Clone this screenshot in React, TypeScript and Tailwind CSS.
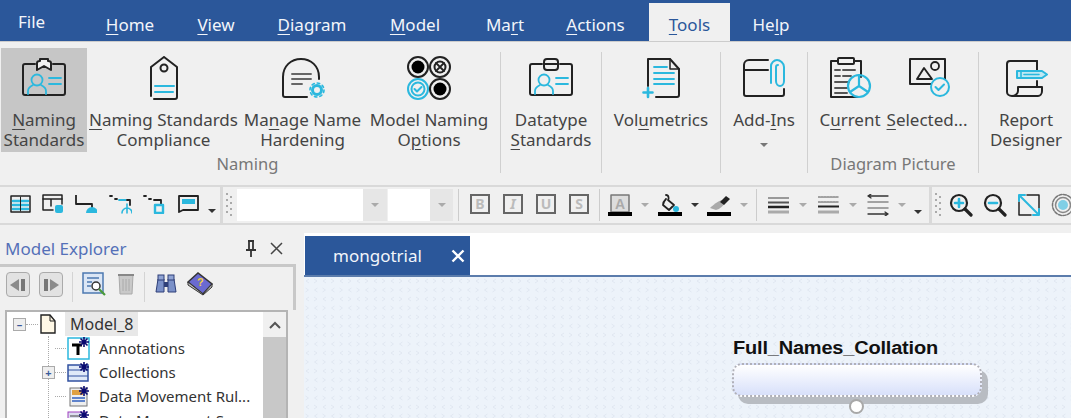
import type { ReactNode } from "react";

const cyan = "#2bb8de";
const ink = "#222";

function U({ children }: { children: ReactNode }) {
  return <span className="underline decoration-1 underline-offset-[3px]">{children}</span>;
}

function MenuTab({ children, w, active }: { children: ReactNode; w: string; active?: boolean }) {
  return (
    <div
      className={`flex items-end justify-center pb-[4px] text-[17px] leading-6 ${w} ${
        active ? "mt-[3px] bg-[#f0f0f0] text-[#2b579a]" : "text-[#f2f5fa]"
      }`}
    >
      <span>{children}</span>
    </div>
  );
}

function RibbonBtn({
  icon,
  lines,
  w,
  active,
  caret,
}: {
  icon: ReactNode;
  lines: ReactNode[];
  w: string;
  active?: boolean;
  caret?: boolean;
}) {
  return (
    <div className={`flex h-[104px] shrink-0 flex-col items-center ${w} ${active ? "bg-[#c6c6c6]" : ""}`}>
      <div className="mb-[2px] flex h-[60px] items-center justify-center">{icon}</div>
      <div className="text-center text-[17px] leading-5 whitespace-nowrap text-[#444]">
        {lines.map((l, i) => (
          <div key={i}>{l}</div>
        ))}
      </div>
      {caret && <div className="mt-[13px] h-0 w-0 border-x-[4px] border-t-[4px] border-x-transparent border-t-[#777]" />}
    </div>
  );
}

function RibbonSep() {
  return <div className="mt-[4px] h-[121px] w-px shrink-0 bg-[#d0d0d0]" />;
}

function Caret({ dark }: { dark?: boolean }) {
  return (
    <div
      className={`h-0 w-0 border-x-[4px] border-t-[4px] border-x-transparent ${
        dark ? "border-t-[#333]" : "border-t-[#aaa]"
      }`}
    />
  );
}

function Svg({ w, h, children }: { w: number; h: number; children: ReactNode }) {
  return (
    <svg width={w} height={h} viewBox={`0 0 ${w} ${h}`} fill="none" strokeLinecap="round" strokeLinejoin="round">
      {children}
    </svg>
  );
}

const BadgeIcon = ({ db }: { db?: boolean }) => (
  <Svg w={44} h={42}>
    <path d="M13 7H3a2 2 0 0 0-2 2v27a2 2 0 0 0 2 2h38a2 2 0 0 0 2-2V9a2 2 0 0 0-2-2H31" stroke={ink} strokeWidth="2" />
    {db ? (
      <g stroke={ink} strokeWidth="2" fill="#f0f0f0">
        <rect x="15" y="2" width="14" height="11" rx="3" />
        <path d="M15 7h14" />
      </g>
    ) : (
      <path d="M15 13V6c0-2 2-2 3-2V2h8v2c1 0 3 0 3 2v7l-7-4z" stroke={ink} strokeWidth="2" fill="#f0f0f0" />
    )}
    <circle cx="15" cy="23" r="5.5" stroke={cyan} strokeWidth="1.8" />
    <path d="M6 37v-3c0-3 3-5 5-6M24 37v-3c0-3-3-5-5-6" stroke={cyan} strokeWidth="1.8" />
    <path d="M27 21h12M27 27h12" stroke={cyan} strokeWidth="1.8" />
  </Svg>
);

const TagIcon = () => (
  <Svg w={32} h={46}>
    <path d="M16 2 29 12v30a2 2 0 0 1-2 2H6M3 41V12L16 2" stroke={ink} strokeWidth="2" />
    <circle cx="16" cy="13" r="3.5" stroke={ink} strokeWidth="2" />
    <path d="M7 31h19M7 37h18" stroke={cyan} strokeWidth="2" />
  </Svg>
);

const HardenIcon = () => (
  <Svg w={44} h={42}>
    <path d="M38 22V20C38 9 30 2 20 2S2 9 2 20v18a2 2 0 0 0 2 2h22" stroke={ink} strokeWidth="2" />
    <path d="M11 17h19M11 22h19M11 27h10" stroke="#666" strokeWidth="1.9" />
    <circle cx="36" cy="33" r="4.5" stroke={cyan} strokeWidth="3" />
    <circle cx="36" cy="33" r="7" stroke={cyan} strokeWidth="1.6" strokeDasharray="2.5 3" />
  </Svg>
);

const FourDots = () => (
  <Svg w={46} h={46}>
    <circle cx="12" cy="12" r="10" stroke={ink} strokeWidth="2" />
    <circle cx="12" cy="12" r="6.5" fill="#000" />
    <circle cx="34" cy="12" r="10" stroke={ink} strokeWidth="2" />
    <circle cx="34" cy="12" r="5.5" stroke={ink} strokeWidth="2" />
    <path d="M30 8l8 8M38 8l-8 8" stroke={ink} strokeWidth="1.8" />
    <circle cx="12" cy="34" r="10" stroke={cyan} strokeWidth="2" />
    <circle cx="12" cy="34" r="6.5" stroke={cyan} strokeWidth="2" />
    <path d="M8.500 34l2.500 2.500 4.500-4.500" stroke={cyan} strokeWidth="2" />
    <circle cx="34" cy="34" r="10" stroke={ink} strokeWidth="2" />
    <circle cx="34" cy="34" r="6.5" fill="#000" />
  </Svg>
);

const VolIcon = () => (
  <Svg w={40} h={44}>
    <path d="M7 30V3h22l9 10v26a2 2 0 0 1-2 2H15" stroke={ink} strokeWidth="2" />
    <path d="M29 3v10h9" stroke={ink} strokeWidth="1.5" />
    <path d="M13 11h13M13 17h20M13 23h20M13 28h20" stroke={cyan} strokeWidth="1.8" />
    <path d="M7 32v9M2.500 36.500h9" stroke={cyan} strokeWidth="2.600" />
  </Svg>
);

const AddInIcon = () => (
  <Svg w={46} h={42}>
    <path d="M27 3H8a5 5 0 0 0-5 5v29a2 2 0 0 0 2 2h36a2 2 0 0 0 2-2V32" stroke={ink} strokeWidth="2" />
    <path d="M3 13h24" stroke={ink} strokeWidth="2" />
    <path d="M30 26V9c0-3 3-6 6-6s7 3 7 7v14c0 3-2 5-4 5s-4-2-4-5V10c0-1 1-2 2-2" stroke={cyan} strokeWidth="2" />
  </Svg>
);

const ClipIcon = () => (
  <Svg w={44} h={44}>
    <path d="M10 5H3v36h27M26 5h7v16" stroke={ink} strokeWidth="2" />
    <rect x="10" y="2" width="16" height="6" rx="1" stroke={ink} strokeWidth="2" />
    <path d="M7 14h5M15 14h12M7 20h5M15 20h8M7 26h14M7 32h12M7 37h12" stroke="#555" strokeWidth="1.900" />
    <circle cx="31" cy="30" r="11" stroke={cyan} strokeWidth="2.200" />
    <path d="M31 30V19M31 30l-9 6M31 30l9 6" stroke={cyan} strokeWidth="2.200" />
  </Svg>
);

const PictureIcon = () => (
  <div className="ml-[4px]">
    <Svg w={42} h={42}>
      <path d="M24 27H2V2h35v20" stroke={ink} strokeWidth="2" />
      <path d="M9 22 16 11l8 11z" stroke={ink} strokeWidth="1.900" />
      <circle cx="27" cy="9" r="4" stroke={ink} strokeWidth="1.800" />
      <circle cx="32" cy="30" r="9" fill="#f0f0f0" stroke={cyan} strokeWidth="2" />
      <path d="M27.500 30l3 3 5.500-5.500" stroke={cyan} strokeWidth="2" />
    </Svg>
  </div>
);

const ReportIcon = () => (
  <Svg w={44} h={40}>
    <path d="M33 3H6a3 3 0 0 0-3 3v28c0 2 2 4 5 4h26c2 0 4-2 4-5v-4H14v4c0 3-3 5-6 5" stroke={ink} strokeWidth="2" />
    <path d="M33 3v11M33 23v6" stroke={ink} strokeWidth="2" />
    <path d="M13 13h25l5 3.500-5 3.500H13z" stroke={cyan} strokeWidth="2" fill="#bfe8f3" />
    <path d="M17 13v7M20 16.500h15" stroke={cyan} strokeWidth="1.600" />
  </Svg>
);

function FormatBtn({ letter, italic }: { letter: string; italic?: boolean }) {
  return (
    <div
      className={`flex h-[20px] w-[20px] items-center justify-center border-2 border-[#666] text-[14px] leading-none font-bold text-[#bbb] ${
        italic ? "italic" : ""
      }`}
    >
      {letter}
    </div>
  );
}

function Drop({ w }: { w: string }) {
  return (
    <div className={`flex h-[32px] items-center justify-center bg-[#e6e6e6] ${w}`}>
      <Caret />
    </div>
  );
}

function Gripper() {
  return (
    <svg width="10" height="26" className="shrink-0">
      {[0, 1, 2, 3, 4, 5, 6, 7].map((i) => (
        <rect key={i} x={i % 2 ? 5 : 1} y={i * 3 + 1} width="2" height="2" fill="#aaa" />
      ))}
    </svg>
  );
}

function Connector({ expander, w }: { expander?: "+" | "-"; w: string }) {
  return (
    <div className="relative z-10 flex items-center">
      <div className="flex w-[13px] justify-center">
        {expander && (
          <div className="flex h-[13px] w-[13px] items-center justify-center border border-[#aaa] bg-[#eee] text-[11px] leading-none font-bold text-[#3a5a9a]">
            {expander === "-" ? "–" : "+"}
          </div>
        )}
      </div>
      <div className={`h-0 border-t border-dotted border-[#aaa] ${w}`} />
    </div>
  );
}

function TreeRow({ expander, icon, label }: { expander?: "+" | "-"; icon: ReactNode; label: string }) {
  return (
    <div className="flex h-6 items-center whitespace-nowrap">
      <div className="w-[35px] shrink-0" />
      <Connector expander={expander} w="w-[11px]" />
      <div className="ml-[1px] flex w-[24px] shrink-0 justify-center">{icon}</div>
      <div className="ml-[8px] text-[15px] leading-6 text-[#333]">{label}</div>
    </div>
  );
}

const Star = () => <path d="M17 1v10M12 6h10M13.500 2.500l7 7M20.500 2.500l-7 7" stroke="#0a0a70" strokeWidth="1.600" />;

function App() {
  return (
    <div className="h-[418px] w-[1071px] overflow-hidden bg-[#f0f0f0] font-['Noto_Sans',sans-serif]">
      {/* MENU TABS */}
      <div className="flex h-[41px] bg-[#2b579a] shadow-[0_1px_0_#ccc]">
        <div className="flex w-[90px] items-end pb-[7px] pl-[18px] text-[17px] leading-6 text-[#f2f5fa]">File</div>
        <MenuTab w="w-[80px]"><U>H</U>ome</MenuTab>
        <MenuTab w="w-[92px]"><U>V</U>iew</MenuTab>
        <MenuTab w="w-[100px]"><U>D</U>iagram</MenuTab>
        <MenuTab w="w-[106px]"><U>M</U>odel</MenuTab>
        <MenuTab w="w-[74px]">Ma<U>r</U>t</MenuTab>
        <MenuTab w="w-[107px]"><U>A</U>ctions</MenuTab>
        <MenuTab w="w-[81px]" active><U>T</U>ools</MenuTab>
        <MenuTab w="w-[82px]">He<U>l</U>p</MenuTab>
      </div>

      {/* RIBBON */}
      <div className="flex h-[138px] items-start pt-[7px]">
        <div className="ml-px flex w-[494px] shrink-0 flex-col">
          <div className="flex">
            <RibbonBtn w="w-[86px]" active icon={<BadgeIcon />} lines={[<><U>N</U>aming</>, "Standards"]} />
            <RibbonBtn w="w-[153px]" icon={<TagIcon />} lines={[<><U>N</U>aming Standards</>, "Compliance"]} />
            <RibbonBtn w="w-[125px]" icon={<HardenIcon />} lines={[<>Ma<U>n</U>age Name</>, "Hardening"]} />
            <RibbonBtn w="w-[128px]" icon={<FourDots />} lines={["Model Naming", <>O<U>p</U>tions</>]} />
          </div>
          <div className="pr-[1px] text-center text-[16.500px] leading-6 text-[#777]">Naming</div>
        </div>
        <div className="ml-[5px]"><RibbonSep /></div>
        <RibbonBtn w="w-[100px]" icon={<BadgeIcon db />} lines={["Datatype", <><U>S</U>tandards</>]} />
        <RibbonSep />
        <RibbonBtn w="w-[118px]" icon={<VolIcon />} lines={[<>Vol<U>u</U>metrics</>]} />
        <RibbonSep />
        <RibbonBtn w="w-[86px]" icon={<AddInIcon />} lines={[<>Add-<U>I</U>ns</>]} caret />
        <RibbonSep />
        <div className="flex w-[170px] shrink-0 flex-col">
          <div className="flex">
            <RibbonBtn w="w-[84px]" icon={<ClipIcon />} lines={[<>C<U>u</U>rrent</>]} />
            <RibbonBtn w="w-[70px]" icon={<PictureIcon />} lines={[<><U>S</U>elected...</>]} />
          </div>
          <div className="text-center text-[16.500px] leading-6 text-[#777]">Diagram Picture</div>
        </div>
        <RibbonSep />
        <RibbonBtn w="w-[94px]" icon={<ReportIcon />} lines={["Report", "Designer"]} />
      </div>

      {/* TOOLBAR */}
      <div className="mt-[6px] flex h-[40px] items-center border-y-2 border-[#d9d9d9] pl-[1px] *:shrink-0">
        <div className="flex h-full w-[222px] items-center border-r-[3px] border-[#d9d9d9] pl-[9px]">
          <div className="-mt-[2px] flex items-center gap-[11px]">
            <Svg w={21} h={18}>
              <rect x="1" y="1" width="19" height="16" stroke={ink} strokeWidth="1.500" />
              <path d="M3 6h15M3 10h15M3 14h15" stroke={cyan} strokeWidth="2.500" />
              <path d="M10.500 2v14" stroke={ink} />
            </Svg>
            <Svg w={22} h={20}>
              <path d="M11 16H1V1h19v9" stroke={ink} strokeWidth="1.500" />
              <path d="M1 5h19M9 5v7" stroke={ink} strokeWidth="1.500" />
              <rect x="13" y="11" width="8" height="8" rx="2" fill={cyan} />
            </Svg>
            <Svg w={22} h={20}>
              <path d="M1 2v8h16v6" stroke={ink} strokeWidth="1.800" strokeLinecap="square" />
              <path d="M11 19a6 6 0 0 1 12 0z" fill={cyan} />
            </Svg>
            <Svg w={24} h={20}>
              <path d="M2 2h2M7 5h2" stroke={ink} strokeWidth="1.800" />
              <path d="M11 6h7" stroke={cyan} strokeWidth="1.800" />
              <path d="M19 6h3v5" stroke={ink} strokeWidth="1.800" />
              <path d="M19 10v9M14 19a5 5 0 0 1 10 0" stroke={cyan} strokeWidth="1.600" />
            </Svg>
            <Svg w={22} h={20}>
              <path d="M1 2h2M6 5h2M11 6h7v4" stroke={ink} strokeWidth="1.800" />
              <rect x="12" y="11" width="8" height="8" stroke={cyan} strokeWidth="2.400" />
            </Svg>
            <Svg w={23} h={20}>
              <path d="M3 18V2h19v14H7z" stroke={ink} strokeWidth="1.800" />
              <rect x="6" y="5" width="13" height="5" fill={cyan} />
            </Svg>
            <div className="mt-[14px] -ml-[2px]"><Caret dark /></div>
          </div>
        </div>
        <div className="ml-[2px]"><Gripper /></div>
        <div className="ml-[2px] h-[32px] w-[126px] bg-white" />
        <Drop w="w-[24px]" />
        <div className="ml-px h-[32px] w-[42px] bg-white" />
        <Drop w="w-[23px]" />
        <div className="ml-[5px] h-[32px] w-px bg-[#ccc]" />
        <div className="-mt-[2px] ml-[11px] flex items-center gap-[13px]">
          <FormatBtn letter="B" />
          <FormatBtn letter="I" italic />
          <FormatBtn letter="U" />
          <FormatBtn letter="S" />
        </div>
        <div className="mr-[8px] ml-[10px] h-[32px] w-px bg-[#ccc]" />
        <div className="flex items-center">
          <Svg w={24} h={24}>
            <rect x="3" y="2" width="18" height="17" stroke="#777" strokeWidth="1.500" fill="#ddd" />
            <text x="7" y="16" fontSize="14" fontWeight="700" fill="#aaa" fontFamily="Liberation Sans">A</text>
            <rect x="0" y="19" width="24" height="4" fill="#000" />
          </Svg>
          <div className="ml-[9px]"><Caret /></div>
          <div className="ml-[9px]">
            <Svg w={24} h={24}>
              <path d="M8 2c3 0 3 4 2 5l6 5-5 5-6-5c0-3 2-5 3-6" stroke={ink} strokeWidth="1.800" />
              <circle cx="18" cy="16" r="3" fill={cyan} />
              <rect x="0" y="19" width="24" height="4" fill="#000" />
            </Svg>
          </div>
          <div className="ml-[9px]"><Caret dark /></div>
          <div className="ml-[8px]">
            <Svg w={24} h={24}>
              <path d="M3 15c3-3 8-7 12-8l3 3c-2 3-5 6-9 7z" fill="#aaa" />
              <path d="M13 9l6-6 4 3-6 6z" fill="#222" />
              <rect x="0" y="19" width="24" height="4" fill="#000" />
            </Svg>
          </div>
          <div className="ml-[9px]"><Caret /></div>
        </div>
        <div className="mr-[11px] ml-[8px] h-[32px] w-px bg-[#ccc]" />
        <div className="flex items-center">
          <Svg w={21} h={20}>
            <path d="M0 3h21" stroke="#999" strokeWidth="2" />
            <path d="M0 7.500h21" stroke="#555" strokeWidth="2" />
            <path d="M0 12h21" stroke="#222" strokeWidth="2.500" />
            <path d="M0 17h21" stroke="#aaa" strokeWidth="3" />
          </Svg>
          <div className="ml-[10px]"><Caret /></div>
          <div className="ml-[11px]">
            <Svg w={21} h={20}>
              <path d="M0 2h21M0 7h21" stroke="#888" strokeWidth="1.500" strokeDasharray="2 1" />
              <path d="M0 11.500h21" stroke="#222" strokeWidth="2" />
              <path d="M0 17h21" stroke="#aaa" strokeWidth="3" />
            </Svg>
          </div>
          <div className="ml-[10px]"><Caret /></div>
          <div className="ml-[10px]">
            <Svg w={22} h={22}>
              <path d="M1 2h20M1 2l3-2M1 2l3 2" stroke="#333" strokeWidth="1.300" />
              <path d="M1 8h20" stroke="#888" strokeWidth="1.500" />
              <path d="M1 14h20" stroke="#888" strokeWidth="1.500" />
              <path d="M1 20h20M21 20l-3-2M21 20l-3 2" stroke="#333" strokeWidth="1.300" />
            </Svg>
          </div>
          <div className="ml-[9px]"><Caret /></div>
          <div className="mt-[14px] ml-[8px]"><Caret dark /></div>
        </div>
        <div className="ml-[7px] flex h-full items-center border-l-[3px] border-[#d9d9d9] pl-[2px]">
          <Gripper />
          <div className="ml-[5px] flex items-center gap-[10px]">
            <Svg w={24} h={24}>
              <circle cx="10" cy="10" r="8" stroke={ink} strokeWidth="2.200" />
              <path d="M6 10h8M10 6v8" stroke={cyan} strokeWidth="2.600" />
              <path d="M16 16l6 6" stroke={ink} strokeWidth="3.200" />
            </Svg>
            <Svg w={24} h={24}>
              <circle cx="10" cy="10" r="8" stroke={ink} strokeWidth="2.200" />
              <path d="M6 10h8" stroke={cyan} strokeWidth="2.600" />
              <path d="M16 16l6 6" stroke={ink} strokeWidth="3.200" />
            </Svg>
            <Svg w={24} h={24}>
              <path d="M10 2h12v13M14 22H2V9" stroke={ink} strokeWidth="1.500" />
              <path d="M3 3l18 18" stroke={cyan} strokeWidth="2" />
              <path d="M2 8V2h6M22 16v6h-6" stroke={cyan} strokeWidth="2" />
            </Svg>
            <Svg w={24} h={24}>
              <circle cx="12" cy="12" r="10.500" stroke="#777" strokeWidth="1.500" strokeDasharray="3 1.500" />
              <circle cx="12" cy="12" r="7.500" stroke="#888" strokeWidth="1.500" />
              <circle cx="12" cy="12" r="5" fill="#7fcfe6" />
            </Svg>
          </div>
        </div>
      </div>

      {/* BODY */}
      <div className="mt-[8px] flex h-[185px]">
        {/* MODEL EXPLORER */}
        <div className="flex w-[296px] shrink-0 flex-col">
          <div className="flex h-[31px] shrink-0 items-center pr-[13px] pl-[5px]">
            <span className="text-[17px] leading-6 text-[#5570b8]">Model Explorer</span>
            <svg width="14" height="17" viewBox="0 0 14 17" className="ml-auto" fill="none">
              <path d="M4 1h6M5 1v9h4V1M2 10h10M7 10v7" stroke="#333" strokeWidth="1.800" />
            </svg>
            <svg width="13" height="13" viewBox="0 0 13 13" className="ml-[12px]" fill="none">
              <path d="M1 1l11 11M12 1 1 12" stroke="#444" strokeWidth="1.500" />
            </svg>
          </div>
          <div className="min-h-0 flex-1 border-t-[3px] border-[#c8c8c8] pl-[5px]">
            <div className="flex h-[43px] items-start border-r-[3px] border-[#c8c8c8] pt-[5px]">
              <div className="ml-px flex h-[25px] w-[24px] items-center justify-center rounded-sm border border-[#aaa] bg-[#e2e2e2]">
                <svg width="16" height="14" viewBox="0 0 16 14"><path d="M0 7l9-6v12z" fill="#8a8a8a" /><rect x="11" y="1" width="4" height="12" fill="#777" /></svg>
              </div>
              <div className="ml-[9px] flex h-[25px] w-[24px] items-center justify-center rounded-sm border border-[#aaa] bg-[#e2e2e2]">
                <svg width="16" height="14" viewBox="0 0 16 14"><rect x="1" y="1" width="4" height="12" fill="#777" /><path d="M16 7 7 1v12z" fill="#8a8a8a" /></svg>
              </div>
              <div className="mx-[9px] h-[30px] w-px bg-[#d4d4d4]" />
              <svg width="24" height="24" viewBox="0 0 24 24" fill="none">
                <rect x="1" y="1" width="20" height="20" fill="#dbe6f5" stroke="#4c78b0" strokeWidth="1.500" />
                <path d="M5 6h12M5 10h5M5 14h4" stroke="#4c78b0" strokeWidth="1.500" />
                <circle cx="14" cy="14" r="4" fill="#fff" stroke="#333" strokeWidth="1.500" />
                <path d="M17 17l6 6" stroke="#4a9a3a" strokeWidth="2.200" />
              </svg>
              <svg width="18" height="24" viewBox="0 0 18 24" className="ml-[11px]" fill="none">
                <path d="M2 3h14l-1 19H3z" fill="#c9c9c9" stroke="#aaa" />
                <path d="M1 3h16" stroke="#888" strokeWidth="2" />
                <path d="M6 7v12M9 7v12M12 7v12" stroke="#aaa" />
              </svg>
              <div className="mx-[9px] h-[30px] w-px bg-[#d4d4d4]" />
              <svg width="24" height="20" viewBox="0 0 24 20" className="mt-[2px]">
                <path d="M2 18 4 5h6v13zM14 18V5h6l2 13z" fill="#7a90c8" stroke="#2e3f78" />
                <rect x="4" y="1" width="6" height="5" fill="#90a4d4" stroke="#2e3f78" />
                <rect x="14" y="1" width="6" height="5" fill="#90a4d4" stroke="#2e3f78" />
                <rect x="10" y="8" width="4" height="5" fill="#2e3f78" />
              </svg>
              <svg width="26" height="24" viewBox="0 0 26 24" className="ml-[9px]">
                <path d="M1 10 11 1l14 11-9 10z" fill="#6a6ad0" stroke="#333" strokeWidth="1.500" />
                <path d="M1 10v3l15 10 9-8v-3l-9 10z" fill="#bbb" stroke="#333" />
                <text x="10" y="14" fontSize="11" fontWeight="700" fill="#f0d040" fontFamily="Liberation Sans">?</text>
              </svg>
            </div>
            <div className="flex h-[200px] w-[283px] border-2 border-[#b4b4b4] bg-white">
              <div className="relative flex-1 overflow-hidden">
                {/* tree guide line */}
                <div className="absolute top-[24px] bottom-0 left-[41px] border-l border-dotted border-[#aaa]" />
                <div className="flex h-6 items-center whitespace-nowrap">
                  <div className="w-[6px] shrink-0" />
                  <Connector expander="-" w="w-[12px]" />
                  <div className="ml-[2px] shrink-0">
                    <svg width="16" height="20" viewBox="0 0 16 20" fill="none">
                      <path d="M1 1h9l5 6v12H1z" fill="#fff8e6" stroke="#222" strokeWidth="1.400" />
                      <path d="M10 1v6h5" stroke="#222" />
                    </svg>
                  </div>
                  <div className="ml-[9px] bg-[#e8e8e8] px-[5px] text-[16px] leading-6 text-[#333]">Model_8</div>
                </div>
                <TreeRow
                  label="Annotations"
                  icon={
                    <svg width="24" height="24" viewBox="0 0 24 24" fill="none">
                      <rect x="1" y="2" width="21" height="21" fill="#fff" stroke={cyan} strokeWidth="1.500" />
                      <path d="M5 9h10M11 9v10" stroke="#000" strokeWidth="3" />
                      <Star />
                    </svg>
                  }
                />
                <TreeRow
                  expander="+"
                  label="Collections"
                  icon={
                    <svg width="24" height="22" viewBox="0 0 24 22" fill="none">
                      <rect x="1" y="4" width="20" height="16" fill="#dfe9f8" stroke="#3050a0" strokeWidth="1.500" />
                      <path d="M1 9h20M1 15h20" stroke="#3050a0" />
                      <Star />
                    </svg>
                  }
                />
                <TreeRow
                  label="Data Movement Rul..."
                  icon={
                    <svg width="24" height="22" viewBox="0 0 24 22" fill="none">
                      <rect x="3" y="3" width="17" height="18" fill="#eee" stroke="#777" />
                      <rect x="5" y="5" width="11" height="5" fill="#e0a040" />
                      <path d="M5 13h13M5 16h13" stroke="#3060c0" strokeWidth="1.300" />
                      <Star />
                    </svg>
                  }
                />
                <TreeRow
                  label="Data Movement Sour..."
                  icon={
                    <svg width="24" height="22" viewBox="0 0 24 22" fill="none">
                      <rect x="1" y="3" width="18" height="18" fill="#dde" stroke="#a040c0" />
                      <path d="M3 7h9l4 4" stroke="#444" />
                      <Star />
                    </svg>
                  }
                />
              </div>
              <div className="flex w-[23px] shrink-0 flex-col bg-[#c8c8c8]">
                <div className="flex h-[25px] items-center justify-center bg-[#f0f0f0]">
                  <svg width="12" height="8" viewBox="0 0 12 8" fill="none">
                    <path d="M1 7l5-5 5 5" stroke="#555" strokeWidth="2" />
                  </svg>
                </div>
              </div>
            </div>
          </div>
        </div>

        {/* DIAGRAM */}
        <div className="ml-[8px] flex-1 bg-white pt-[3px] pl-px">
          <div className="flex h-[39px] w-[165px] items-center bg-[#2b579a] pr-[5px] pl-[28px] text-[17px] leading-6 text-[#f2f5fa]">
            <span>mongotrial</span>
            <svg width="14" height="14" viewBox="0 0 14 14" className="ml-auto" fill="none">
              <path d="M1.500 1.500l11 11M12.500 1.500l-11 11" stroke="#fff" strokeWidth="2.400" />
            </svg>
          </div>
          <div className="relative -ml-px h-[200px] border-t-2 border-[#5b7cac] bg-[#edf3fa]">
            <svg width="767" height="200" className="absolute inset-0">
              <defs>
                <pattern id="dots" width="17" height="18" patternUnits="userSpaceOnUse">
                  <path d="M5 2 2 4l3 2M10 2l3 2-3 2M13.500 11l-3 2 3 2M1.500 11l3 2-3 2" stroke="#e0e7f1" fill="none" />
                </pattern>
              </defs>
              <rect width="767" height="200" fill="url(#dots)" />
            </svg>
            <div className="absolute top-[59px] left-[429px] origin-left scale-y-90 font-['Liberation_Sans',sans-serif] text-[20px] leading-6 font-bold tracking-[-0.2px] whitespace-nowrap text-[#111]">
              Full_Names_Collation
            </div>
            <div className="absolute top-[86px] left-[428px] h-[34px] w-[250px] rounded-[10px] border-2 border-dotted border-[#b0b0b8] bg-gradient-to-b from-white to-[#d8e0fa] shadow-[6px_7px_0_#b8bcc2]" />
            <div className="absolute top-[122px] left-[545px] h-[15px] w-[15px] rounded-full border-2 border-[#a8a8a8] bg-white" />
          </div>
        </div>
      </div>
    </div>
  );
}

export default App;
